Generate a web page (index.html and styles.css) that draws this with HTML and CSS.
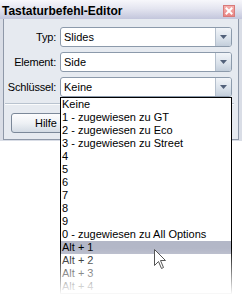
FILE: index.html
```html
<!DOCTYPE html>
<html>
<head>
<meta charset="utf-8">
<link rel="stylesheet" href="styles.css">
</head>
<body>
<div class="window">
  <div class="titlebar">
    <span class="title">Tastaturbefehl-Editor</span>
    <span class="close"><svg width="12" height="12" viewBox="0 0 12 12"><path d="M3.5 3.5 L8.5 8.5 M8.5 3.5 L3.5 8.5" stroke="#fff" stroke-width="2" stroke-linecap="square"/></svg></span>
  </div>
  <div class="outer">
    <div class="frame">
      <div class="form">
        <div class="row">
          <span class="label">Typ:</span>
          <div class="select"><span class="value">Slides</span><span class="arrow"><svg width="7" height="4" viewBox="0 0 7 4"><path d="M0 0 H7 L3.5 4 Z" fill="#52617a"/></svg></span></div>
        </div>
        <div class="row">
          <span class="label">Element:</span>
          <div class="select"><span class="value">Side</span><span class="arrow"><svg width="7" height="4" viewBox="0 0 7 4"><path d="M0 0 H7 L3.5 4 Z" fill="#52617a"/></svg></span></div>
        </div>
        <div class="row">
          <span class="label">Schlüssel:</span>
          <div class="select open"><span class="value">Keine</span><span class="arrow"><svg width="7" height="4" viewBox="0 0 7 4"><path d="M0 0 H7 L3.5 4 Z" fill="#52617a"/></svg></span>
            <ul class="list">
              <li>Keine</li>
              <li>1 - zugewiesen zu GT</li>
              <li>2 - zugewiesen zu Eco</li>
              <li>3 - zugewiesen zu Street</li>
              <li>4</li>
              <li>5</li>
              <li>6</li>
              <li>7</li>
              <li>8</li>
              <li>9</li>
              <li>0 - zugewiesen zu All Options</li>
              <li class="hl">Alt + 1</li>
              <li>Alt + 2</li>
              <li>Alt + 3</li>
              <li>Alt + 4</li>
            </ul>
          </div>
        </div>
      </div>
      <div class="sep"></div>
      <div class="buttons"><span class="btn">Hilfe</span></div>
    </div>
  </div>
</div>
<svg class="cursor" width="13" height="21" viewBox="0 0 13 21"><path d="M0.5 0.5 L0.5 16.5 L4.5 12.5 L7.5 19.5 L9.5 18.5 L6.5 11.5 L11.5 11.5 Z" fill="#fff" stroke="#555" stroke-width="1"/></svg>
</body>
</html>
```

FILE: styles.css
```css
html, body {
  margin: 0;
  padding: 0;
  background: #fff;
}
body {
  font-family: "Liberation Sans", Arial, sans-serif;
  font-size: 11px;
  color: #000;
  position: relative;
  width: 242px;
  height: 303px;
  overflow: hidden;
}
.window {
  width: 242px;
}
.titlebar {
  height: 19px;
  box-sizing: border-box;
  display: flex;
  justify-content: space-between;
  align-items: flex-start;
  padding: 0 7px 0 2px;
  background: linear-gradient(#f7f7fb, #e4e5f0 45%, #c3c6dc);
}
.title {
  font-weight: bold;
  font-size: 12px;
  line-height: 14px;
  padding-top: 4px;
}
.close {
  margin-top: 5px;
  width: 12px;
  height: 12px;
  box-sizing: border-box;
  border: 1px solid #d77a7a;
  background: linear-gradient(#f6b0ae, #e98684);
  display: flex;
  align-items: center;
  justify-content: center;
}
.close svg {
  display: block;
  margin: -1px;
}
.outer {
  background: #d9dde6;
  padding: 0 3px 1px 3px;
}
.frame {
  background: #e6eaf0;
  border: 1px solid #8e98a8;
  border-top: none;
  padding: 8px 4px 6px 0;
}
.form {
  display: flex;
  flex-direction: column;
  gap: 5px;
}
.row {
  display: flex;
  align-items: center;
  gap: 4px;
  height: 20px;
}
.label {
  width: 52px;
  text-align: right;
  letter-spacing: -0.2px;
}
.select {
  position: relative;
  width: 172px;
  height: 20px;
  box-sizing: border-box;
  border: 1px solid #8c9aab;
  border-radius: 3px;
  background: #fff;
  display: flex;
  align-items: center;
  justify-content: space-between;
}
.value {
  padding-left: 3px;
}
.arrow {
  width: 16px;
  height: 18px;
  box-sizing: border-box;
  border-left: 1px solid #b5c0cd;
  border-radius: 0 2px 2px 0;
  background: linear-gradient(#f2f5f9, #d9e1ea 60%, #c3cedb);
  display: flex;
  align-items: center;
  justify-content: center;
}
.arrow svg {
  display: block;
}
.list {
  position: absolute;
  left: -1px;
  right: -1px;
  top: calc(100% + 1px);
  margin: 0;
  padding: 0;
  list-style: none;
  background: #fff;
  border: 1px solid #000;
  z-index: 2;
}
.list li {
  height: 13px;
  line-height: 13px;
  padding-left: 1px;
  white-space: nowrap;
}
.list li.hl {
  background: #b3b7c7;
}
.list::after {
  content: "";
  position: absolute;
  left: -2px;
  right: -2px;
  top: 150px;
  bottom: -2px;
  background: linear-gradient(rgba(255,255,255,0), rgba(255,255,255,0.35) 35%, rgba(255,255,255,0.75) 75%, #fff);
}
.sep {
  margin: 6px 0 0 1px;
  height: 1px;
  background: #b9c3cf;
  border-bottom: 1px solid #fafbfc;
}
.buttons {
  display: flex;
  padding: 8px 0 0 7px;
}
.btn {
  width: 70px;
  height: 20px;
  box-sizing: border-box;
  border: 1px solid #7b8899;
  border-radius: 3px;
  background: linear-gradient(#fdfdfe, #eef1f5 50%, #d3dbe4);
  display: flex;
  align-items: center;
  justify-content: center;
}
.cursor {
  position: absolute;
  left: 154px;
  top: 249px;
  z-index: 5;
}
```
